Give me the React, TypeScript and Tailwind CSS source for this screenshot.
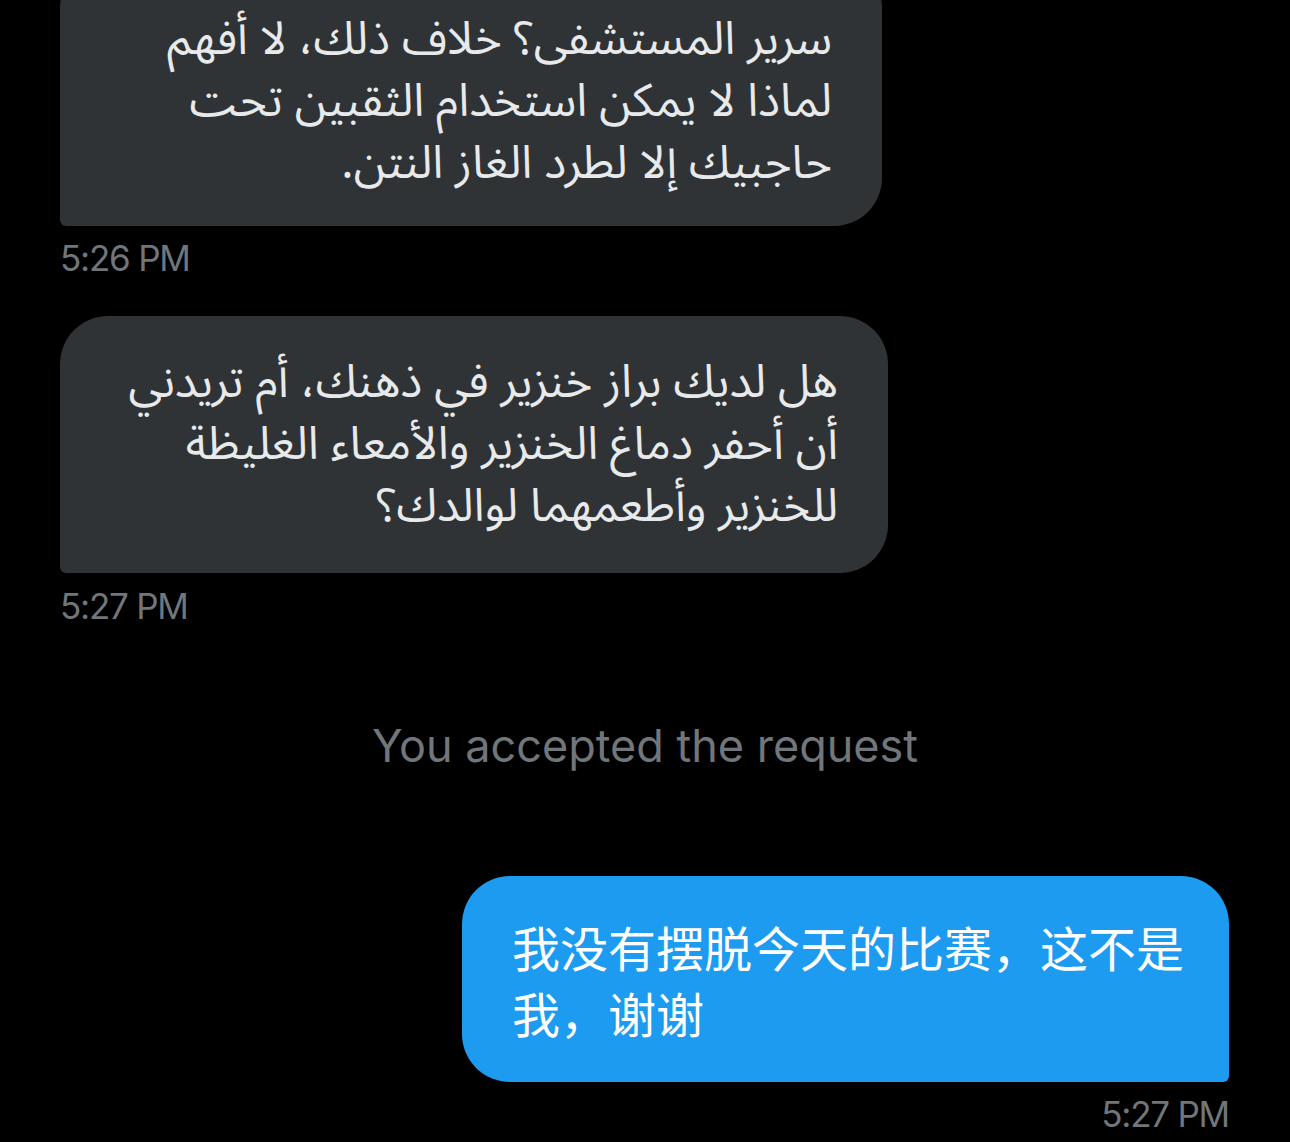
import React from "react";

const arabic = { fontFamily: '"Noto Sans Arabic", "DejaVu Sans", sans-serif' };
const sf = { fontFamily: 'Inter, "Liberation Sans", sans-serif' };

export default function App() {
  return (
    <div className="w-[1290px] h-[1142px] overflow-hidden bg-black flex flex-col pl-[60px] pr-[61px]">
      {/* Bubble 1 (received, clipped at top) */}
      <div
        dir="rtl"
        className="mt-[-40px] w-[822px] self-start bg-[#2f3336] text-[#e7e9ea] rounded-tl-[48px] rounded-tr-[48px] rounded-br-[48px] rounded-bl-[6px] pt-[49px] pb-[31px] pr-[50px] pl-[30px] text-[46px] leading-[62px]"
        style={arabic}
      >
        <div className="whitespace-nowrap">سرير المستشفى؟ خلاف ذلك، لا أفهم</div>
        <div className="whitespace-nowrap">لماذا لا يمكن استخدام الثقبين تحت</div>
        <div className="whitespace-nowrap">حاجبيك إلا لطرد الغاز النتن.</div>
      </div>
      <div className="mt-[14px] text-[35px] leading-[36px] tracking-[-0.035em] text-[#71767b]" style={sf}>
        5:26 PM
      </div>

      {/* Bubble 2 */}
      <div
        dir="rtl"
        className="mt-[40px] w-[828px] self-start bg-[#2f3336] text-[#e7e9ea] rounded-tl-[48px] rounded-tr-[48px] rounded-br-[48px] rounded-bl-[6px] pt-[36px] pb-[35px] pr-[50px] pl-[30px] text-[46px] leading-[62px]"
        style={arabic}
      >
        <div className="whitespace-nowrap">هل لديك براز خنزير في ذهنك، أم تريدني</div>
        <div className="whitespace-nowrap">أن أحفر دماغ الخنزير والأمعاء الغليظة</div>
        <div className="whitespace-nowrap">للخنزير وأطعمهما لوالدك؟</div>
      </div>
      <div className="mt-[15px] text-[35px] leading-[36px] tracking-[-0.035em] text-[#71767b]" style={sf}>
        5:27 PM
      </div>

      {/* System message */}
      <div className="mt-[96px] -ml-[60px] -mr-[61px] text-center text-[45px] leading-[52px] text-[#71767b]" style={sf}>
        You accepted the request
      </div>

      {/* Bubble 3 (sent) */}
      <div
        className="mt-[104px] w-[767px] self-end bg-[#1d9bf0] text-white rounded-tl-[48px] rounded-tr-[48px] rounded-bl-[48px] rounded-br-[6px] pt-[37px] pb-[37px] pl-[50px] pr-[30px] text-[48px] leading-[66px]"
        style={{ fontFamily: '"Noto Sans CJK SC", sans-serif' }}
      >
        <div className="whitespace-nowrap">我没有摆脱今天的比赛，这不是</div>
        <div className="whitespace-nowrap">我，谢谢</div>
      </div>
      <div className="mt-[14px] self-end text-[35px] leading-[36px] tracking-[-0.035em] text-[#71767b]" style={sf}>
        5:27 PM
      </div>
    </div>
  );
}
